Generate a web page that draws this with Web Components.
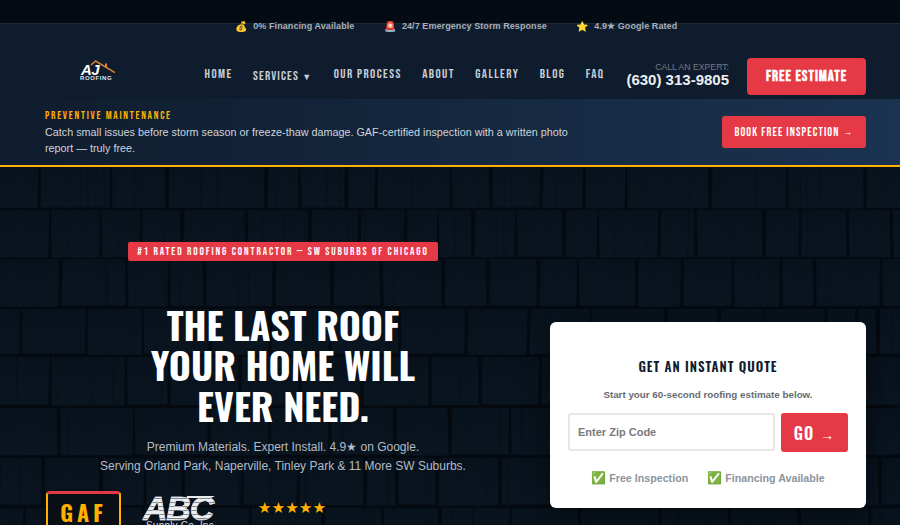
<!DOCTYPE html>
<html lang="en"><head><meta charset="utf-8"><title>AJ Roofing</title>
<style>
html,body{margin:0;padding:0;background:#060b11}
body{font-family:"Liberation Sans",Arial,sans-serif;height:525px;overflow:hidden}
</style></head><body>
<top-bar>
  <top-item icon="💰">0% Financing Available</top-item>
  <top-item icon="🚨">24/7 Emergency Storm Response</top-item>
  <top-item icon="⭐">4.9★ Google Rated</top-item>
</top-bar>
<site-header></site-header>
<promo-bar></promo-bar>
<hero-section></hero-section>

<script>
class TopBar extends HTMLElement {
    constructor() {
        super();
        this.attachShadow({ mode: 'open' }).innerHTML = `
            <style>
                :host { display: flex; justify-content: center; gap: 30px; height: 23px; background: #050b13; box-sizing: content-box;
                    border-bottom: 1px solid #1b2838; padding-left: 13px; position: relative; z-index: 2; }
            </style>
            <slot></slot>`;
    }
}
class TopItem extends HTMLElement {
    constructor() {
        super();
        this.attachShadow({ mode: 'open' }).innerHTML = `
            <style>
                :host { display: flex; gap: 5px; align-items: center; height: 12px; margin-top: 20px; white-space: nowrap;
                    font: bold 9px "Liberation Sans", sans-serif; letter-spacing: .08px; color: #a8b0b8; }
                .i { font-size: 10px; font-family: "Noto Color Emoji", sans-serif; }
            </style>
            <span class="i">${this.getAttribute('icon')}</span><slot></slot>`;
    }
}
class SiteHeader extends HTMLElement {
    constructor() {
        super();
        const links = ['HOME', 'SERVICES', 'OUR PROCESS', 'ABOUT', 'GALLERY', 'BLOG', 'FAQ'];
        this.attachShadow({ mode: 'open' }).innerHTML = `
            <style>
                :host { display: flex; align-items: center; box-sizing: border-box; height: 75px; padding: 29px 34px 0 45px; background: #0f1c2d; }
                .logo { width: 40px; margin: -6px 0 0 35px; position: relative; height: 30px; color: #fff; flex: none; }
                .logo svg { position: absolute; left: 0; top: 2px; }
                .aj { position: absolute; left: 1px; top: 5px; font: italic bold 15px/14px "Liberation Sans", sans-serif; letter-spacing: -.5px; }
                .rf { position: absolute; left: 0; top: 17px; font: bold 6px/7px "Liberation Sans", sans-serif; letter-spacing: .6px; color: #dfe3e8; }
                nav { display: flex; gap: 20.5px; align-items: center; margin: -4px 22px 0 auto; }
                a { font: 13px "Bebas Neue", sans-serif; letter-spacing: 1.4px; color: #c9ced6; white-space: nowrap; }
                a.down { position: relative; top: 2px; letter-spacing: 1.15px; }
                a.down span { font: 9px "Liberation Sans", sans-serif; letter-spacing: 0; margin-right: 2px; }
                .call { text-align: right; margin: -2px 18px 0 0; color: #fff; white-space: nowrap; }
                .call small { display: block; font: 8.7px/10px "Liberation Sans", sans-serif; color: #6f7a86; }
                .call b { display: block; font: bold 15px/16px "Liberation Sans", sans-serif; color: #eceff2; }
                .cta { width: 119px; height: 37px; display: flex; align-items: center; justify-content: center; background: #e63946; flex: none;
                    border-radius: 4px; color: #fff; font: bold 15px "Bebas Neue", sans-serif; letter-spacing: 1px; white-space: nowrap; }
            </style>
            <div class="logo">
                <svg width="40" height="20" viewBox="0 0 40 20"><path d="M11 5 L15.6 1 L35 12.6" fill="none" stroke="#d9842e" stroke-width="1.6"/><path d="M25 3.5v3l2 1v-4z" fill="#d9842e"/></svg>
                <span class="aj">AJ</span><span class="rf">ROOFING</span>
            </div>
            <nav>${links.map(l => l === 'SERVICES' ? `<a class="down">${l} <span>▼</span></a>` : `<a>${l}</a>`).join('')}</nav>
            <div class="call"><small>CALL AN EXPERT:</small><b>(630) 313-9805</b></div>
            <div class="cta">FREE ESTIMATE</div>`;
    }
}
class PromoBar extends HTMLElement {
    constructor() {
        super();
        this.attachShadow({ mode: 'open' }).innerHTML = `
            <style>
                :host { display: flex; align-items: center; justify-content: space-between; height: 66px; padding: 0 34px 0 45px;
                    background: linear-gradient(90deg, #0f1c2d, #1a3350); border-bottom: 2px solid #ffb000; }
                .t { width: 535px; }
                .l { font: 11px/14px "Bebas Neue", sans-serif; letter-spacing: 1.73px; color: #ffb000; }
                p { margin: 1px 0 0; font: 10.8px/16px "Liberation Sans", sans-serif; color: #ced4dc; }
                .b { width: 144px; height: 32px; display: flex; align-items: center; justify-content: center; background: #e63946;
                    border-radius: 3px; color: #fff; font: 12px "Bebas Neue", sans-serif; letter-spacing: 1.1px; white-space: nowrap; }
                .b i { font: 9px "Liberation Sans", sans-serif; margin-left: 4px; }
            </style>
            <div class="t"><div class="l">PREVENTIVE MAINTENANCE</div>
            <p>Catch small issues before storm season or freeze-thaw damage. GAF-certified inspection with a written photo report — truly free.</p></div>
            <div class="b">BOOK FREE INSPECTION <i>→</i></div>`;
    }
}

// shingle rows: top, bottom, centre of each gap (read off the reference)
const SHINGLE_ROWS = [
    [164, 208, [39, 111, 167, 266, 300, 346, 376, 451, 491, 541, 584, 626, 710, 787, 865]],
    [210, 257, [50, 101, 141, 182, 247, 310, 359, 405, 438, 473, 516, 564, 598, 659, 696, 764, 800, 848, 892]],
    [259, 306, [60, 127, 169, 205, 274, 332, 382, 443, 488, 538, 578, 637, 682, 733, 781, 815, 881]],
    [309, 354, [21, 86, 143, 210, 270, 330, 400, 466, 528, 591, 666, 719, 764, 826, 856, 878]],
    [357, 405, [50, 126, 169, 240, 300, 362, 430, 480, 540, 600, 660, 720, 790, 860]],
    [408, 455, [59, 134, 209, 270, 330, 395, 450, 510, 570, 640, 700, 770, 840]],
    [458, 505, [43, 101, 145, 183, 242, 298, 365, 397, 437, 500, 560, 620, 690, 750, 820, 880]],
    [508, 540, [24, 143, 250, 323, 383, 440, 510, 580, 660, 730, 800, 870]],
];
class ShingleBg extends HTMLElement {
    constructor() {
        super();
        let seed = 7;
        const rnd = () => (seed = (seed * 16807) % 2147483647) / 2147483647;
        let shapes = '';
        SHINGLE_ROWS.forEach(([top, bottom, gaps]) => {
            const edges = [-20, ...gaps, 920];
            for (let i = 0; i < edges.length - 1; i++) {
                const l = edges[i] + 1.6, r = edges[i + 1] - 1.6;
                const t1 = (rnd() - .5) * 2.4, t2 = (rnd() - .5) * 2.4;
                const b = bottom + (rnd() - .5) * 1.2;
                shapes += `<polygon points="${l + t1},${top} ${r + t2},${top} ${r},${b} ${l},${b}" fill="url(#s)"/>`;
                for (let g = 0; g < (r - l) / 14; g++) {
                    const x = l + rnd() * (r - l);
                    shapes += `<line x1="${x}" y1="${top}" x2="${x + rnd() * 2 - 1}" y2="${b}" stroke="#060d15" stroke-opacity=".3" stroke-width="${.5 + rnd() * .6}"/>`;
                }
            }
        });
        this.attachShadow({ mode: 'open' }).innerHTML = `
            <style>
                :host { position: absolute; inset: 0; display: block; background: #050a10; overflow: hidden; }
                svg { display: block; filter: blur(.6px); }
            </style>
            <svg width="900" height="400" viewBox="0 167 900 400">
                <defs><linearGradient id="s" x1="0" y1="0" x2="0" y2="1"><stop offset="0" stop-color="#08121c"/><stop offset="1" stop-color="#0a1520"/></linearGradient></defs>
                ${shapes}
            </svg>`;
    }
}
class HeroSection extends HTMLElement {
    constructor() {
        super();
        this.attachShadow({ mode: 'open' }).innerHTML = `
            <style>
                :host { display: block; position: relative; height: 358px; overflow: hidden; }
                .wrap { position: relative; display: grid; grid-template-columns: 476px 316px; gap: 29px; padding: 75px 34px 0 45px; }
                .left { display: flex; flex-direction: column; align-items: center; }
                .badge { height: 19px; width: 310px; display: flex; align-items: center; justify-content: center; background: #e63946; border-radius: 2px;
                    color: #fff; font: 11px "Bebas Neue", "Oswald", sans-serif; letter-spacing: 1.84px; white-space: nowrap; }
                h1 { margin: 43px 0 0; font: 700 37.8px/40.4px "Oswald", sans-serif; color: #fff; text-align: center; }
                .sub { margin: 13px 0 0; font: 12px/19px "Liberation Sans", sans-serif; color: #b4bcc6; text-align: center; white-space: nowrap; }
                trust-row { align-self: stretch; margin-top: 15px; }
                quote-card { margin-top: 80px; }
            </style>
            <shingle-bg></shingle-bg>
            <div class="wrap">
                <div class="left">
                    <div class="badge">#1 RATED ROOFING CONTRACTOR — SW SUBURBS OF CHICAGO</div>
                    <h1>THE LAST ROOF<br>YOUR HOME WILL<br>EVER NEED.</h1>
                    <p class="sub">Premium Materials. Expert Install. 4.9★ on Google.<br>Serving Orland Park, Naperville, Tinley Park &amp; 11 More SW Suburbs.</p>
                    <trust-row></trust-row>
                </div>
                <quote-card></quote-card>
            </div>`;
    }
}
class TrustRow extends HTMLElement {
    constructor() {
        super();
        this.attachShadow({ mode: 'open' }).innerHTML = `
            <style>
                :host { display: flex; align-items: flex-start; }
                .gaf { box-sizing: border-box; width: 75px; height: 50px; margin-left: 1px; border: 2px solid #ffb000; border-top: 3px solid #e63946; border-radius: 4px;
                    background: #0a0f16; text-align: center; color: #ffb000; font: 700 22px/30px "Oswald", sans-serif; letter-spacing: 4px; padding-top: 3px; flex: none; }
                .abc { position: relative; margin-left: 22px; width: 78px; height: 40px; flex: none; color: #e8eaed; }
                .abc b { display: block; margin-top: 4px; font: italic bold 34px/27px "Liberation Sans", sans-serif; letter-spacing: -1.2px; white-space: nowrap;
                    -webkit-text-stroke: .6px #d5d8dc;
                    background: repeating-linear-gradient(180deg, #f0f1f3 0 3px, #7d848c 3px 4px); -webkit-background-clip: text; background-clip: text; color: transparent; }
                .abc svg { position: absolute; left: 44px; top: 4px; }
                .abc small { display: block; margin-top: -1px; padding-left: 3px; font: 10px/10px "Liberation Sans", sans-serif; letter-spacing: .2px; color: #d6dade; white-space: nowrap; }
                .rate { margin-left: 32px; width: 78px; flex: none; text-align: center; color: #ffb000; margin-top: 9px; }
                .rate span { display: block; font: 15.3px/16px "DejaVu Sans", sans-serif; white-space: nowrap; }
                .rate small { display: block; margin-top: 8px; font: bold 10px/12px "Liberation Sans", sans-serif; color: #d6dade; white-space: nowrap; }
            </style>
            <div class="gaf">GAF</div>
            <div class="abc"><b>ABC</b><svg width="34" height="4" viewBox="0 0 34 4"><path d="M0 1H28L24 3H0Z" fill="#e8eaed"/></svg><small>Supply Co. Inc.</small></div>
            <div class="rate"><span>★★★★★</span><small>4.9 Rating</small></div>`;
    }
}
class QuoteCard extends HTMLElement {
    constructor() {
        super();
        this.attachShadow({ mode: 'open' }).innerHTML = `
            <style>
                :host { display: block; box-sizing: border-box; height: 186px; background: #fff; border-radius: 6px; padding: 35px 18px 0; text-align: center; box-shadow: 0 8px 30px rgba(0,0,0,.4); }
                h2 { margin: 0; font: 600 13px/18px "Oswald", sans-serif; letter-spacing: 1px; color: #0f1c2d; }
                p { margin: 13px 0 0; font: bold 9.8px/14px "Liberation Sans", sans-serif; color: #666b70; }
                .row { display: flex; gap: 6px; margin-top: 11px; }
                zip-input { flex: 1; }
                .go { width: 67px; height: 39px; flex: none; display: flex; align-items: center; justify-content: center; gap: 6px; background: #e63946; border-radius: 3px;
                    color: #fff; font: 600 16px "Oswald", sans-serif; letter-spacing: 1px; }
                .go i { font: 14px "Liberation Sans", sans-serif; font-style: normal; margin-top: 4px; }
                .checks { display: flex; justify-content: center; gap: 19px; margin-top: 19px; font: bold 10.7px/14px "Liberation Sans", sans-serif; color: #8b959e; }
                .checks span span { font: 12px "Noto Color Emoji", sans-serif; margin-right: 3px; }
            </style>
            <h2>GET AN INSTANT QUOTE</h2>
            <p>Start your 60-second roofing estimate below.</p>
            <div class="row"><zip-input></zip-input><div class="go">GO <i>→</i></div></div>
            <div class="checks"><span><span>✅</span>Free Inspection</span><span><span>✅</span>Financing Available</span></div>`;
    }
}
class ZipInput extends HTMLElement {
    constructor() {
        super();
        this.attachShadow({ mode: 'open' }).innerHTML = `
            <style>
                :host { display: flex; box-sizing: border-box; height: 38px; border: 2px solid #e6e6e6; border-radius: 3px; align-items: center; padding-left: 8px;
                    font: bold 11px "Liberation Sans", sans-serif; color: #7a7a7a; }
            </style>Enter Zip Code`;
    }
}
customElements.define('top-bar', TopBar);
customElements.define('top-item', TopItem);
customElements.define('site-header', SiteHeader);
customElements.define('promo-bar', PromoBar);
customElements.define('shingle-bg', ShingleBg);
customElements.define('trust-row', TrustRow);
customElements.define('zip-input', ZipInput);
customElements.define('quote-card', QuoteCard);
customElements.define('hero-section', HeroSection);
</script>
</body></html>
